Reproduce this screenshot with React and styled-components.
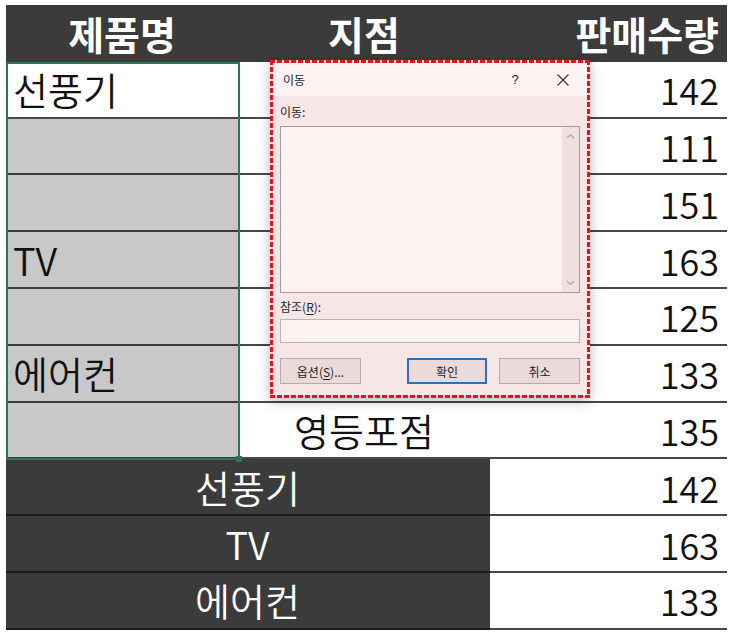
import React from "react";
import styled, { createGlobalStyle, css } from "styled-components";

const GlobalStyle = createGlobalStyle`
  html, body { margin: 0; padding: 0; background: #ffffff; }
  body { font-family: "Noto Sans CJK KR", "Noto Sans", sans-serif; }
  * { box-sizing: border-box; }
`;

const ROW = 56.8;

const Page = styled.div`
  position: relative;
  width: 736px;
  height: 635px;
  padding: 5px 0 0 6px;
  overflow: hidden;
`;

const Sheet = styled.div`
  position: relative;
  width: 721px;
  display: grid;
  grid-template-columns: 233px 251px 237px;
  grid-auto-rows: ${ROW}px;
`;

const tones = {
  head: css`
    background: #3b3b3b;
    color: #ffffff;
    font-weight: 700;
    font-size: 39px;
  `,
  white: css`
    background: #ffffff;
    color: #111111;
    border-bottom: 2px solid #484848;
  `,
  gray: css`
    background: #c8c8c8;
    color: #111111;
    border-bottom: 2px solid #3a3a3a;
  `,
  dark: css`
    background: #3b3b3b;
    color: #ffffff;
    border-bottom: 2px solid #1c1c1c;
  `,
};

const Cell = styled.div`
  display: flex;
  align-items: center;
  font-size: ${(p) => (p.$num ? 36 : 38)}px;
  font-weight: 350;
  line-height: 1;
  white-space: nowrap;
  padding: 0 8px 0 7px;
  grid-column: ${(p) => (p.$span ? `span ${p.$span}` : "auto")};
  justify-content: ${(p) =>
    p.$align === "right" ? "flex-end" : p.$align === "center" ? "center" : "flex-start"};
  ${(p) => tones[p.$tone]}
`;

const Selection = styled.div`
  position: absolute;
  left: 0;
  top: ${ROW}px;
  width: 234px;
  height: ${ROW * 7 + 1}px;
  border: 2px solid #2f7450;
  pointer-events: none;
`;

const Handle = styled.div`
  position: absolute;
  right: -4px;
  bottom: -4px;
  width: 6px;
  height: 6px;
  background: #2f7450;
`;

/* ---------- dialog ---------- */

const dash = (dir) =>
  `repeating-linear-gradient(${dir}, #e2151d 0 5px, #fbdcdc 5px 7px)`;

const DialogFrame = styled.div`
  position: absolute;
  left: 270px;
  top: 60px;
  width: 320px;
  height: 338px;
  padding: 3px;
  background:
    ${dash("90deg")} top / 100% 3px no-repeat,
    ${dash("90deg")} bottom / 100% 3px no-repeat,
    ${dash("180deg")} left / 3px 100% no-repeat,
    ${dash("180deg")} right / 3px 100% no-repeat,
    #f6e6e6;
  box-shadow: 0 3px 12px rgba(0, 0, 0, 0.28);
  display: flex;
  flex-direction: column;
  font-size: 12px;
  color: #1e1e1e;
`;

const TitleBar = styled.div`
  height: 33px;
  flex: none;
  display: flex;
  align-items: center;
  background: #fdf3f3;
  padding-left: 10px;
`;

const Title = styled.span`
  flex: 1;
  font-size: 12px;
`;

const TitleButton = styled.span`
  width: 48px;
  height: 33px;
  display: flex;
  align-items: center;
  justify-content: center;
  font-family: "Liberation Sans", "Noto Sans", sans-serif;
  font-size: 13px;
  color: #222;
`;

const Body = styled.div`
  flex: 1;
  display: flex;
  flex-direction: column;
  padding: 7px 7px 11px 7px;
`;

const Label = styled.div`
  height: 18px;
  line-height: 18px;
  font-size: 12px;
  margin-bottom: ${(p) => p.$mb}px;
  margin-top: ${(p) => p.$mt || 0}px;
`;

const Key = styled.span`
  text-decoration: underline;
  text-underline-offset: 2px;
`;

const ListBox = styled.div`
  height: 167px;
  flex: none;
  border: 1px solid #a59b9b;
  background: #fdf2f2;
  display: flex;
  justify-content: flex-end;
`;

const ScrollBar = styled.div`
  width: 17px;
  background: #f0e1e1;
  display: flex;
  flex-direction: column;
  justify-content: space-between;
  align-items: center;
  padding: 6px 0;
`;

const TextInput = styled.div`
  height: 24px;
  flex: none;
  border: 1px solid #bdb2b2;
  background: #fdf2f2;
`;

const ButtonRow = styled.div`
  margin-top: 15px;
  display: flex;
  align-items: stretch;
  height: 26px;
`;

const Button = styled.div`
  width: ${(p) => p.$w}px;
  margin-right: ${(p) => p.$mr || 0}px;
  display: flex;
  align-items: center;
  justify-content: center;
  background: #ebdada;
  border: ${(p) => (p.$primary ? "2px solid #2f6fb7" : "1px solid #b6aaaa")};
  font-size: 12px;
  color: #1e1e1e;
`;

const Spacer = styled.div`
  flex: 1;
`;

const Chevron = ({ up }) => (
  <svg width="9" height="6" viewBox="0 0 9 6">
    <path
      d={up ? "M1 5 L4.5 1.5 L8 5" : "M1 1 L4.5 4.5 L8 1"}
      fill="none"
      stroke="#b3a8a8"
      strokeWidth="1.2"
    />
  </svg>
);

const CloseIcon = () => (
  <svg width="12" height="12" viewBox="0 0 12 12">
    <path d="M0.5 0.5 L11.5 11.5 M11.5 0.5 L0.5 11.5" stroke="#333" strokeWidth="1.1" />
  </svg>
);

const body = [
  { product: "선풍기", tone: "white", branch: "", qty: 142 },
  { product: "", tone: "gray", branch: "", qty: 111 },
  { product: "", tone: "gray", branch: "", qty: 151 },
  { product: "TV", tone: "gray", branch: "", qty: 163 },
  { product: "", tone: "gray", branch: "", qty: 125 },
  { product: "에어컨", tone: "gray", branch: "", qty: 133 },
  { product: "", tone: "gray", branch: "영등포점", qty: 135 },
];

const summary = [
  { product: "선풍기", qty: 142 },
  { product: "TV", qty: 163 },
  { product: "에어컨", qty: 133 },
];

export default function App() {
  return (
    <>
      <GlobalStyle />
      <Page>
        <Sheet>
          <Cell $tone="head" $align="center">제품명</Cell>
          <Cell $tone="head" $align="center">지점</Cell>
          <Cell $tone="head" $align="right">판매수량</Cell>

          {body.map((r, i) => (
            <React.Fragment key={i}>
              <Cell $tone={r.tone}>{r.product}</Cell>
              <Cell $tone="white" $align="center">{r.branch}</Cell>
              <Cell $tone="white" $align="right" $num>{r.qty}</Cell>
            </React.Fragment>
          ))}

          {summary.map((r, i) => (
            <React.Fragment key={`s${i}`}>
              <Cell $tone="dark" $align="center" $span={2}>{r.product}</Cell>
              <Cell $tone="white" $align="right" $num>{r.qty}</Cell>
            </React.Fragment>
          ))}

          <Selection>
            <Handle />
          </Selection>
        </Sheet>

        <DialogFrame>
          <TitleBar>
            <Title>이동</Title>
            <TitleButton>?</TitleButton>
            <TitleButton>
              <CloseIcon />
            </TitleButton>
          </TitleBar>
          <Body>
            <Label $mb={5}>이동:</Label>
            <ListBox>
              <ScrollBar>
                <Chevron up />
                <Chevron />
              </ScrollBar>
            </ListBox>
            <Label $mt={5} $mb={3}>
              참조(<Key>R</Key>):
            </Label>
            <TextInput />
            <ButtonRow>
              <Button $w={81}>
                옵션(<Key>S</Key>)...
              </Button>
              <Spacer />
              <Button $w={80} $mr={12} $primary>
                확인
              </Button>
              <Button $w={81}>취소</Button>
            </ButtonRow>
          </Body>
        </DialogFrame>
      </Page>
    </>
  );
}
